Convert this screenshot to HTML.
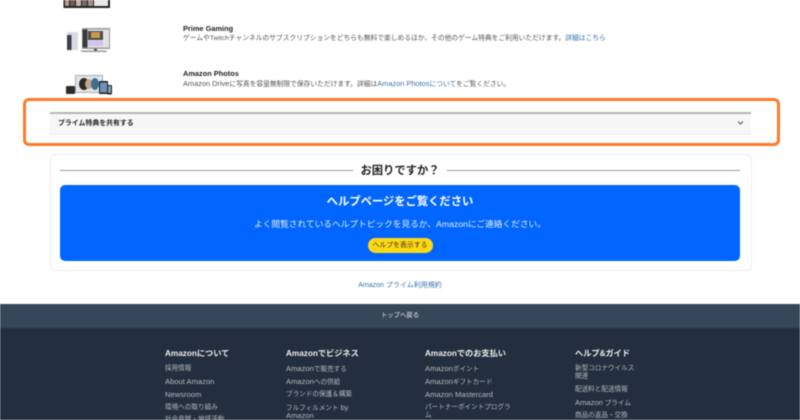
<!DOCTYPE html>
<html lang="ja">
<head>
<meta charset="utf-8">
<style>
html,body{margin:0;padding:0;background:#fff}
body{width:800px;height:420px;overflow:hidden;position:relative;font-family:"Liberation Sans","Noto Sans CJK JP",sans-serif}
#w{position:absolute;left:0;top:0;width:800px;height:420px;overflow:hidden;filter:blur(.45px)}
.a{position:absolute;white-space:nowrap}
.t{font-size:6.75px;line-height:10px;color:#555}
.t b{font-weight:normal;font-size:7.4px}
.h{font-size:7.4px;line-height:10px;font-weight:bold;color:#222}
.f{font-size:6.6px;line-height:8px;color:#b4b9bf}
.f b{font-weight:normal;font-size:7.6px}
.ft{font-size:8.2px;line-height:10px;font-weight:bold;color:#eee}
a{color:#3a72ad;text-decoration:none}
</style>
</head>
<body>
<div id="w">
<svg class="a" style="left:60px;top:0" width="56" height="100" viewBox="0 0 56 100">
<rect x="3.500" y="-2" width="46.500" height="10" fill="#222"/>
<rect x="5" y="-1" width="4" height="7" fill="#b59a94"/>
<rect x="10" y="-1" width="5" height="7" fill="#6f5a58"/>
<rect x="16" y="-1" width="5" height="7" fill="#c9b2aa"/>
<rect x="22" y="-1" width="5" height="7" fill="#7a6a66"/>
<rect x="28" y="-1" width="5" height="7" fill="#a58d86"/>
<rect x="34" y="-1" width="14" height="7" fill="#e8e8e8"/>
<rect x="7" y="32" width="11" height="18" rx="1.500" fill="#d8dade"/>
<rect x="7" y="35" width="4.500" height="15" fill="#3a3f4d"/>
<rect x="22" y="28" width="28" height="21" fill="#9a9a9a"/>
<rect x="22.500" y="29.500" width="26.500" height="18" fill="#e2e2e6"/>
<rect x="22.500" y="29.500" width="5" height="18" fill="#3a3a3a"/>
<rect x="28" y="31" width="15" height="9" fill="#4d4a4c"/>
<rect x="31" y="32" width="9" height="6" fill="#c9994a"/>
<rect x="28" y="41" width="15" height="5" fill="#cfc4ea"/>
<rect x="34" y="49" width="3" height="3" fill="#444"/>
<path d="M20 50.500H46L47 52H22Z" fill="#999"/>
<rect x="6" y="86" width="9" height="8" rx="1" fill="#2c2c2c"/>
<rect x="15" y="75" width="28" height="18" fill="#aaa"/>
<rect x="16" y="76" width="26" height="16" fill="#dfe6ea"/>
<ellipse cx="24" cy="84" rx="5" ry="6" fill="#2e2826"/>
<ellipse cx="29" cy="84" rx="4" ry="5" fill="#c9a48c"/>
<ellipse cx="35" cy="84" rx="4" ry="6" fill="#3c6f92"/>
<rect x="39" y="81" width="9" height="13" rx="1" fill="#1e1e1e"/>
<rect x="40" y="82.500" width="7" height="10" fill="#6f93b3"/>
<rect x="47" y="85" width="5" height="9.500" rx="1" fill="#1e1e1e"/>
<rect x="48" y="86" width="3" height="7" fill="#7d9cb8"/>
</svg>

<div class="a h" style="left:183px;top:24px">Prime Gaming</div>
<div class="a t" style="left:183px;top:33.500px">ゲームやTwitchチャンネルのサブスクリプションをどちらも無料で楽しめるほか、その他のゲーム特典をご利用いただけます。<a href="#">詳細はこちら</a></div>
<div class="a h" style="left:183px;top:68.500px">Amazon Photos</div>
<div class="a t" style="left:183px;top:78.500px"><b>Amazon Drive</b>に写真を容量無制限で保存いただけます。詳細は<a href="#"><b>Amazon Photos</b>について</a>をご覧ください。</div>

<div class="a" style="left:23px;top:98px;width:750.500px;height:41.500px;border:3px solid #ff7a2a;border-radius:6px"></div>
<div class="a" style="left:49.500px;top:112px;width:701px;height:20px;border-top:2px solid #b4b4b4;background:#f7f7f7;border-bottom:.5px solid #eee"></div>
<div class="a" style="left:58px;top:119px;font-size:6.900px;line-height:10px;font-weight:bold;color:#222">プライム特典を共有する</div>
<svg class="a" style="left:737px;top:120px" width="7" height="6" viewBox="0 0 7 6"><path d="M1 1.500 3.500 4 6 1.500" fill="none" stroke="#555" stroke-width="1.100"/></svg>

<div class="a" style="left:49.500px;top:153.500px;width:700px;height:115px;border:1px solid #eee;border-radius:6px"></div>
<div class="a" style="left:60px;top:169.500px;width:292.500px;height:1.500px;background:#999"></div>
<div class="a" style="left:447px;top:169.500px;width:293px;height:1.500px;background:#999"></div>
<div class="a" style="left:300px;width:200px;top:161.500px;text-align:center;font-size:11.300px;line-height:18px;font-weight:bold;color:#222">お困りですか？</div>

<div class="a" style="left:60px;top:185px;width:680px;height:76px;background:#0066ff;border-radius:5px"></div>
<div class="a" style="left:60px;width:680px;top:193px;text-align:center;font-size:11.300px;line-height:18px;font-weight:bold;color:#fff">ヘルプページをご覧ください</div>
<div class="a" style="left:60px;width:680px;top:218px;text-align:center;font-size:8.700px;line-height:12px;color:#e3edff">よく閲覧されているヘルプトピックを見るか、Amazonにご連絡ください。</div>
<div class="a" style="left:367.500px;top:238px;width:65px;height:15px;background:#ffd814;border-radius:8px;text-align:center;font-size:6.900px;line-height:15px;color:#333">ヘルプを表示する</div>

<div class="a" style="left:300px;width:200px;top:281px;text-align:center;font-size:7px;line-height:10px"><a href="#">Amazon プライム利用規約</a></div>

<div class="a" style="left:0;top:304px;width:800px;height:24px;background:#37475a"></div>
<div class="a" style="left:0;width:800px;top:311px;text-align:center;font-size:6.400px;line-height:10px;color:#eee">トップへ戻る</div>
<div class="a" style="left:0;top:328px;width:800px;height:92px;background:#232f3e"></div>

<div class="a ft" style="left:165px;top:348.500px">Amazonについて</div>
<div class="a f" style="left:165px;top:364.500px">採用情報</div>
<div class="a f" style="left:165px;top:378px"><b>About Amazon</b></div>
<div class="a f" style="left:165px;top:391px"><b>Newsroom</b></div>
<div class="a f" style="left:165px;top:403.500px">環境への取り組み</div>
<div class="a f" style="left:165px;top:416px">社会貢献・地域活動</div>

<div class="a ft" style="left:286px;top:348.500px">Amazonでビジネス</div>
<div class="a f" style="left:286px;top:364.500px"><b>Amazon</b>で販売する</div>
<div class="a f" style="left:286px;top:378px"><b>Amazon</b>への供給</div>
<div class="a f" style="left:286px;top:391px">ブランドの保護＆構築</div>
<div class="a f" style="left:286px;top:403.500px">フルフィルメント <b>by</b></div>
<div class="a f" style="left:286px;top:411.500px"><b>Amazon</b></div>

<div class="a ft" style="left:425px;top:348.500px">Amazonでのお支払い</div>
<div class="a f" style="left:425px;top:364.500px"><b>Amazon</b>ポイント</div>
<div class="a f" style="left:425px;top:378px"><b>Amazon</b>ギフトカード</div>
<div class="a f" style="left:425px;top:391px"><b>Amazon Mastercard</b></div>
<div class="a f" style="left:425px;top:403.500px">パートナーポイントプログラ</div>
<div class="a f" style="left:425px;top:411.500px">ム</div>

<div class="a ft" style="left:575px;top:348.500px">ヘルプ&amp;ガイド</div>
<div class="a f" style="left:575px;top:364.500px">新型コロナウイルス</div>
<div class="a f" style="left:575px;top:373px">関連</div>
<div class="a f" style="left:575px;top:386px">配送料と配送情報</div>
<div class="a f" style="left:575px;top:399px"><b>Amazon</b> プライム</div>
<div class="a f" style="left:575px;top:411.500px">商品の返品・交換</div>
</div>
</body>
</html>
